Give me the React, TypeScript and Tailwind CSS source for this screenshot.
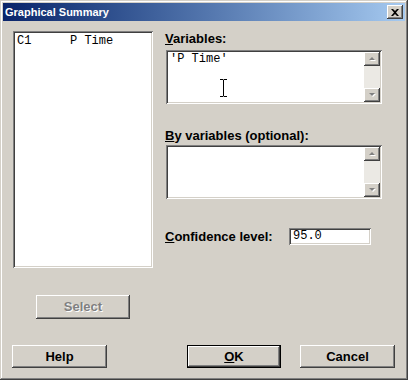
import React from 'react';

const raised =
  'shadow-[inset_-1px_-1px_#404040,inset_1px_1px_#ffffff,inset_-2px_-2px_#808080,inset_2px_2px_#d4d0c8]';
const sunken =
  'shadow-[inset_1px_1px_#808080,inset_-1px_-1px_#ffffff,inset_2px_2px_#404040,inset_-2px_-2px_#d4d0c8]';

const sans = "font-['Liberation_Sans',Arial,sans-serif]";
const mono = "font-['Liberation_Mono','Courier_New',monospace]";

function Arrow({ up }: { up?: boolean }) {
  return (
    <svg width="9" height="6" viewBox="0 0 9 6">
      {up ? (
        <>
          <path d="M2 5h6L5 2z" fill="#ffffff" />
          <path d="M1 4h6L4 1z" fill="#808080" />
        </>
      ) : (
        <>
          <path d="M2 2h6L5 5z" fill="#ffffff" />
          <path d="M1 1h6L4 4z" fill="#808080" />
        </>
      )}
    </svg>
  );
}

function ScrollBox({ text }: { text?: string }) {
  return (
    <div className={`ml-[1px] w-[216px] h-[54px] bg-white p-[2px] flex ${sunken}`}>
      <div className={`flex-1 pl-[2px] text-[12px] leading-[14px] font-normal text-black ${mono} whitespace-pre`}>
        {text}
      </div>
      <div className="w-[16px] flex flex-col bg-[#ebe9e4]">
        <div className={`h-[14px] bg-[#d4d0c8] flex items-center justify-center ${raised}`}>
          <Arrow up />
        </div>
        <div className="flex-1" />
        <div className={`h-[14px] bg-[#d4d0c8] flex items-center justify-center ${raised}`}>
          <Arrow />
        </div>
      </div>
    </div>
  );
}

function Button({
  label,
  width,
  disabled,
  isDefault,
  className = '',
}: {
  label: React.ReactNode;
  width: string;
  disabled?: boolean;
  isDefault?: boolean;
  className?: string;
}) {
  return (
    <div className={`${width} ${className} ${isDefault ? 'border border-black' : ''}`}>
      <div
        className={`w-full h-full bg-[#d4d0c8] flex items-center justify-center text-[13px] font-bold ${sans} ${raised} ${
          disabled ? 'text-[#808080] [text-shadow:1px_1px_#ffffff]' : 'text-black'
        }`}
      >
        {label}
      </div>
    </div>
  );
}

export default function App() {
  return (
    <div
      className={`relative w-[408px] h-[380px] bg-[#d4d0c8] p-[3px] flex flex-col shadow-[inset_-1px_-1px_#404040,inset_1px_1px_#d4d0c8,inset_-2px_-2px_#808080,inset_2px_2px_#ffffff]`}
    >
      {/* Title bar */}
      <div className="h-[18px] flex items-center justify-between bg-gradient-to-r from-[#0a246a] to-[#a6caf0]">
        <span className={`pl-[2px] text-[11px] font-bold text-white ${sans}`}>Graphical Summary</span>
        <div className={`mr-[2px] w-[16px] h-[14px] bg-[#d4d0c8] flex items-center justify-center ${raised}`}>
          <svg width="8" height="7" viewBox="0 0 8 7">
            <path d="M0 0h2l2 2 2-2h2L5 3.5 8 7H6L4 5 2 7H0l3-3.5z" fill="#000" />
          </svg>
        </div>
      </div>

      {/* Body */}
      <div className="flex flex-col pt-[10px]">
        <div className="flex ml-[10px]">
          <div className={`w-[140px] h-[237px] bg-white p-[2px] ${sunken}`}>
            <div className={`pt-[1px] pl-[2px] flex text-[12px] leading-[14px] text-black ${mono}`}>
              <span className="w-[53px]">C1</span>
              <span>P Time</span>
            </div>
          </div>

          <div className={`ml-[12px] flex flex-col text-[13px] font-bold text-black ${sans}`}>
            <div className="h-[19px] leading-[15px]">
              <u>V</u>ariables:
            </div>
            <ScrollBox text="'P Time'" />
            <div className="mt-[24px] h-[17px] leading-[15px]">
              <u>B</u>y variables (optional):
            </div>
            <ScrollBox />
            <div className="mt-[29px] flex items-center h-[17px]">
              <span className="w-[124px] leading-[15px]">
                <u>C</u>onfidence level:
              </span>
              <div className={`w-[82px] h-[17px] bg-white p-[2px] ${sunken}`}>
                <div className={`pl-[2px] text-[12px] leading-[13px] font-normal ${mono}`}>95.0</div>
              </div>
            </div>
          </div>
        </div>

        <Button label="Select" width="w-[94px] h-[24px]" disabled className="ml-[33px] mt-[27px]" />

        <div className="flex ml-[9px] mt-[26px]">
          <Button label="Help" width="w-[95px] h-[23px]" />
          <Button
            label={
              <>
                <u>O</u>K
              </>
            }
            width="w-[94px] h-[23px]"
            isDefault
            className="ml-[80px]"
          />
          <Button label="Cancel" width="w-[95px] h-[23px]" className="ml-[19px]" />
        </div>
      </div>

      {/* I-beam mouse cursor */}
      <svg className="absolute left-[219px] top-[79px]" width="9" height="18" viewBox="0 0 9 18">
        <path d="M1 0.5h3l0.5 0.5 0.5-0.5h3M4.5 1v16M1 17.5h3l0.5-0.5 0.5 0.5h3" stroke="#000" fill="none" />
      </svg>
    </div>
  );
}
